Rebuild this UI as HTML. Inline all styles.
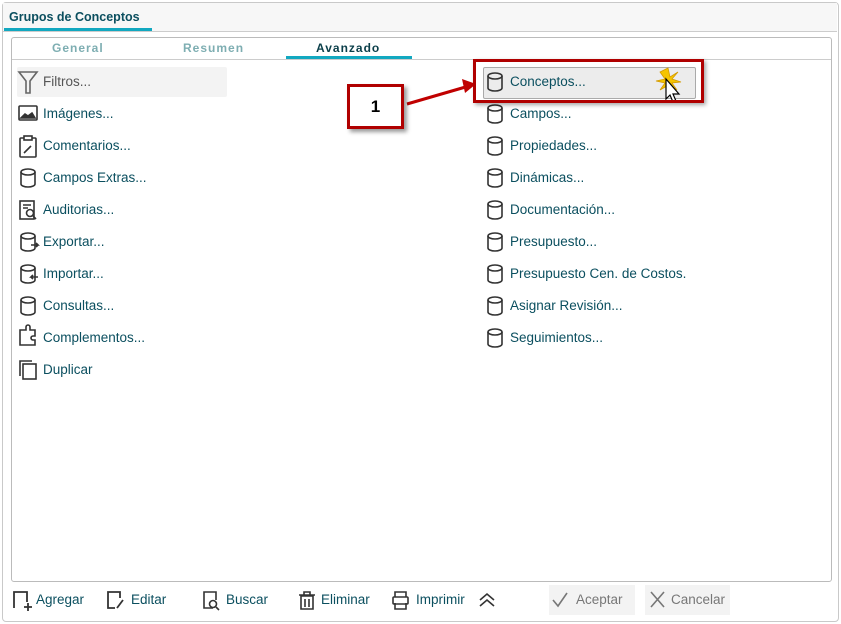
<!DOCTYPE html><html><head><style>
body{margin:0;width:841px;height:624px;background:#fff;font-family:"Liberation Sans",sans-serif;position:relative;overflow:hidden}
.a{position:absolute}
.t{color:#0b4f5f;font-size:13.5px}
</style></head><body>
<div class="a" style="left:2px;top:2px;width:835px;height:618px;border:1px solid #c9c9c9;border-radius:4px"></div>
<div class="a" style="left:3px;top:3px;width:834px;height:28px;background:#f7f7f7;border-bottom:1px solid #ccc"></div>
<div class="a" style="left:9px;top:10px;font-size:12.5px;font-weight:bold;color:#0b4f5f">Grupos de Conceptos</div>
<div class="a" style="left:4px;top:28px;width:148px;height:3px;background:#12a8c0"></div>
<div class="a" style="left:11px;top:37px;width:819px;height:543px;border:1px solid #bbb;border-radius:3px"></div>
<div class="a" style="left:12px;top:59px;width:819px;height:1px;background:#ccc"></div>
<div class="a" style="left:52px;top:41px;font-size:12px;font-weight:bold;color:#7eaeb2;letter-spacing:1px">General</div>
<div class="a" style="left:183px;top:41px;font-size:12px;font-weight:bold;color:#7eaeb2;letter-spacing:1px">Resumen</div>
<div class="a" style="left:316px;top:41px;font-size:12px;font-weight:bold;color:#0b3f4a;letter-spacing:1px">Avanzado</div>
<div class="a" style="left:286px;top:56px;width:126px;height:3px;background:#12a8c0"></div>
<div class="a" style="left:17px;top:67px;width:210px;height:30px;background:#f3f3f3;border-radius:2px"></div>
<div class="a" style="left:549px;top:585px;width:86px;height:30px;background:#f3f3f3"></div>
<div class="a" style="left:645px;top:585px;width:85px;height:30px;background:#f3f3f3"></div>

<svg class="a" style="left:0;top:0" width="841" height="624" fill="none" stroke="#333" stroke-width="1.6">
<path d="M19 72h18l-7 9v12h-4v-12z" stroke="#666"/>
<rect x="19" y="106" width="18" height="14" rx="1"/><path d="M21 118l4-4 3 2 4-3 3 5z" fill="#333"/>
<rect x="20" y="138" width="16" height="19" rx="1"/><rect x="24" y="136" width="8" height="4" fill="#fff"/><path d="M24 153l7-7"/>
<g id="cyl"><ellipse cx="28" cy="172" rx="7" ry="3"/><path d="M21 172v12a7 3 0 0 0 14 0v-12"/></g>
<rect x="20" y="201" width="14" height="18"/><circle cx="30" cy="213" r="3.5"/><path d="M33 216l3 3M23 205h8M23 208h5"/>
<use href="#cyl" y="64"/><path d="M31 245h7l-2-2m2 2l-2 2"/>
<use href="#cyl" y="96"/><path d="M38 277h-7l2-2m-2 2l2 2"/>
<use href="#cyl" y="128"/>
<path d="M20 330h6v-3a2 2 0 0 1 4 0v3h5v6h-2a2 2 0 0 0 0 4h2v5h-15z"/>
<rect x="23" y="364" width="13" height="15"/><path d="M20 376v-15h12"/>
<use href="#cyl" x="467" y="-64"/><use href="#cyl" x="467" y="-32"/><use href="#cyl" x="467" y="0"/>
<use href="#cyl" x="467" y="32"/><use href="#cyl" x="467" y="64"/><use href="#cyl" x="467" y="96"/>
<use href="#cyl" x="467" y="128"/><use href="#cyl" x="467" y="160"/>
<path d="M14 608v-16h13v10M24 607h8M28 603v8" stroke-width="1.8"/>
<path d="M115 608h-7v-16h12v6M117 608l6-8" stroke-width="1.8"/>
<path d="M213 608h-9v-16h12v8"/><circle cx="213" cy="604" r="3.5"/><path d="M216 607l3 3"/>
<path d="M299 595h16M304 595v-3h6v3M301 596h12v13h-12zM305 599v8M309 599v8"/>
<rect x="393" y="597" width="15" height="7" rx="1"/><path d="M395 597v-5h11v5M395 603v6h11v-6"/>
<path d="M480 600l7-6 7 6M480 606l7-6 7 6"/>
<path d="M553 600l5 6 9-13" stroke="#777"/>
<path d="M651 592l13 15M664 592l-13 15" stroke="#777"/>
</svg>
<div class="a" style="left:483px;top:67px;width:211px;height:30px;background:#ececec;border:1px solid #aaa;border-radius:2px"></div>
<svg class="a" style="left:0;top:0" width="841" height="624" fill="none" stroke="#333" stroke-width="1.6">
<ellipse cx="495" cy="76" rx="7" ry="3"/><path d="M488 76v12a7 3 0 0 0 14 0v-12"/>
<path d="M668 68l2 9 8-5-6 7 9 3-9 1 5 7-7-5-1 9-2-8-7 4 5-7-9-2 9-2-5-7z" fill="#f5c400" stroke="#d49a00" stroke-width="0.8"/>
<path d="M666 79v20l4-4 3 7 3-1-3-7h6z" fill="#fff" stroke="#000" stroke-width="1.2"/>
<path d="M407 104l62-18" stroke="#c00000" stroke-width="3"/><path d="M476 84l-14-5 3 14z" fill="#c00000" stroke="none"/>
</svg>
<div class="a" style="left:347px;top:84px;width:57px;height:45px;border:3px solid #b00000;background:#fff;box-shadow:3px 3px 4px rgba(0,0,0,.4);box-sizing:border-box;text-align:center;line-height:39px;font-weight:bold;font-size:17px">1</div>
<div class="a" style="left:473px;top:59px;width:231px;height:44px;border:3px solid #b00000;box-sizing:border-box;box-shadow:2px 2px 4px rgba(0,0,0,.35)"></div>

<div class="a t" style="left:43px;top:74px;color:#555">Filtros...</div>
<div class="a t" style="left:43px;top:106px">Imágenes...</div>
<div class="a t" style="left:43px;top:138px">Comentarios...</div>
<div class="a t" style="left:43px;top:170px">Campos Extras...</div>
<div class="a t" style="left:43px;top:202px">Auditorias...</div>
<div class="a t" style="left:43px;top:234px">Exportar...</div>
<div class="a t" style="left:43px;top:266px">Importar...</div>
<div class="a t" style="left:43px;top:298px">Consultas...</div>
<div class="a t" style="left:43px;top:330px">Complementos...</div>
<div class="a t" style="left:43px;top:362px">Duplicar</div>
<div class="a t" style="left:510px;top:74px">Conceptos...</div>
<div class="a t" style="left:510px;top:106px">Campos...</div>
<div class="a t" style="left:510px;top:138px">Propiedades...</div>
<div class="a t" style="left:510px;top:170px">Dinámicas...</div>
<div class="a t" style="left:510px;top:202px">Documentación...</div>
<div class="a t" style="left:510px;top:234px">Presupuesto...</div>
<div class="a t" style="left:510px;top:266px">Presupuesto Cen. de Costos.</div>
<div class="a t" style="left:510px;top:298px">Asignar Revisión...</div>
<div class="a t" style="left:510px;top:330px">Seguimientos...</div>

<div class="a t" style="left:36px;top:592px">Agregar</div>
<div class="a t" style="left:131px;top:592px">Editar</div>
<div class="a t" style="left:226px;top:592px">Buscar</div>
<div class="a t" style="left:321px;top:592px">Eliminar</div>
<div class="a t" style="left:416px;top:592px">Imprimir</div>
<div class="a t" style="left:576px;top:592px;color:#777">Aceptar</div>
<div class="a t" style="left:671px;top:592px;color:#777">Cancelar</div>
</body></html>
